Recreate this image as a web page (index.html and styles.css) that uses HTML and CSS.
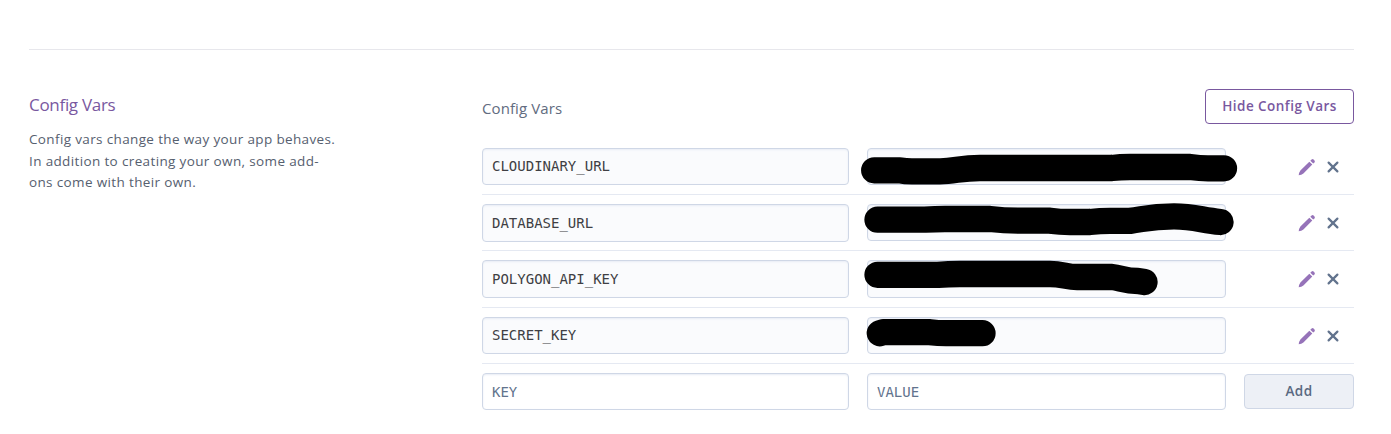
FILE: index.html
```html
<!DOCTYPE html>
<html lang="en">
<head>
<meta charset="utf-8">
<title>Config Vars</title>
<link rel="stylesheet" href="styles.css">
</head>
<body>
<svg class="defs" aria-hidden="true">
  <symbol id="pencil" viewBox="0 0 18 18"><path d="M.7 17.2Q1 14.4 2.4 12.5L11.3 3.7 14.3 6.6 5.4 15.4Q3.5 16.9.7 17.2ZM12.3 2.7 13.6 1.4Q14.5.7 15.6 1.6L16.5 2.5Q17.3 3.5 16.5 4.4L15.2 5.6Z"/></symbol>
  <symbol id="cross" viewBox="0 0 12 12"><path d="M1.6 1.6 10.4 10.4M10.4 1.6 1.6 10.4"/></symbol>
</svg>
<main class="section">
  <aside class="intro">
    <h2 class="intro-title">Config Vars</h2>
    <p class="intro-text">Config vars change the way your app behaves.<br>In addition to creating your own, some add-<br>ons come with their own.</p>
  </aside>
  <section class="config">
    <header class="config-head">
      <h3 class="config-title">Config Vars</h3>
      <button class="btn btn-outline">Hide Config Vars</button>
    </header>
    <div class="row">
      <div class="field">CLOUDINARY_URL</div>
      <div class="field value"><svg class="redaction" viewBox="857 148 390 37"><path d="M874.2 170.3H900Q905 171.3 912 171.3H940C955 171.3 960 168 980 168H1112Q1120 167 1130 167H1190Q1200 168.3 1208 168.3H1224"/></svg></div>
      <div class="actions"><svg class="pencil"><use href="#pencil"/></svg><svg class="cross"><use href="#cross"/></svg></div>
    </div>
    <div class="row">
      <div class="field tall">DATABASE_URL</div>
      <div class="field value"><svg class="redaction" viewBox="857 204 390 37"><path d="M877.5 219.7H925Q935 219 945 219H990Q1005 220.7 1020 220.7H1050Q1060 222 1070 222H1090Q1100 220.9 1110 220.9H1130C1145 219 1150 216.4 1174 216.4C1195 216.4 1202 220.5 1220.5 222"/></svg></div>
      <div class="actions"><svg class="pencil"><use href="#pencil"/></svg><svg class="cross"><use href="#cross"/></svg></div>
    </div>
    <div class="row row-tall">
      <div class="field tall">POLYGON_API_KEY</div>
      <div class="field value tall"><svg class="redaction" viewBox="857 260 390 37"><path d="M877.5 274.8H938Q948 274 960 274H1050C1062 274 1067 277 1077 277H1112C1121 278 1125 281 1138 281L1144.5 282"/></svg></div>
      <div class="actions tall"><svg class="pencil"><use href="#pencil"/></svg><svg class="cross"><use href="#cross"/></svg></div>
    </div>
    <div class="row">
      <div class="field">SECRET_KEY</div>
      <div class="field value"><svg class="redaction" viewBox="857 317 390 37"><path d="M879.8 333.2 883 332.2H930Q938 333.2 946 333.2H982.5"/></svg></div>
      <div class="actions"><svg class="pencil"><use href="#pencil"/></svg><svg class="cross"><use href="#cross"/></svg></div>
    </div>
    <div class="row row-new">
      <input class="field entry" placeholder="KEY" aria-label="Key">
      <input class="field entry" placeholder="VALUE" aria-label="Value">
      <button class="btn btn-add">Add</button>
    </div>
  </section>
</main>
</body>
</html>
```
FILE: styles.css
```css
* { box-sizing: border-box; }
body {
  margin: 0;
  height: 434px;
  overflow: hidden;
  background: #fff;
  color: #3f3f44;
  font-family: "Open Sans", "Noto Sans", sans-serif;
}
.defs { display: none; }
.section {
  display: grid;
  grid-template-columns: 453px 872px;
  margin: 49px 37px 0 29px;
  padding-top: 39px;
  border-top: 1px solid #e7e7ec;
}
.intro-title {
  margin: 3px 0 0;
  font-size: 17px;
  line-height: 26px;
  font-weight: 400;
  color: #79589f;
  letter-spacing: -.3px;
}
.intro-text {
  margin: 11px 0 0;
  font-size: 13.5px;
  line-height: 21.5px;
  color: #56606f;
  letter-spacing: .36px;
  white-space: nowrap;
}
.config-head {
  display: flex;
  justify-content: space-between;
  align-items: flex-start;
  height: 50px;
}
.config-title {
  margin: 7px 0 0;
  font-size: 15px;
  line-height: 24px;
  font-weight: 400;
  color: #626c80;
  letter-spacing: .1px;
}
.btn {
  height: 35px;
  padding: 0 0 1px;
  border: 1px solid;
  border-radius: 4px;
  font: 600 13.5px "Open Sans", sans-serif;
  letter-spacing: .45px;
}
.btn-outline {
  width: 149px;
  background: #fff;
  border-color: #79589f;
  color: #79589f;
}
.row {
  display: grid;
  grid-template-columns: 367px 359px 110px;
  column-gap: 18px;
  align-items: start;
  height: 56px;
  padding-top: 9px;
  border-bottom: 1px solid #e5e9f2;
}
.row-tall { height: 57px; }
.row-new { border-bottom: 0; }
.field {
  position: relative;
  width: 100%;
  height: 37px;
  padding: 0 9px;
  border: 1px solid #cfd7e6;
  border-radius: 4px;
  background: #fafbfd;
  box-shadow: inset 0 1px 2px #e8edf5;
  font: 14px/35px "DejaVu Sans Mono", monospace;
  color: #3f3f44;
}
.field.tall { height: 38px; line-height: 37px; }
.actions.tall { height: 38px; }
.entry { background: #fff; }
.entry::placeholder { color: #62738d; opacity: 1; }
.redaction {
  position: absolute;
  left: -11px;
  top: -1px;
  width: 390px;
  height: 37px;
  overflow: visible;
  fill: none;
  stroke: #000;
  stroke-width: 26.3;
  stroke-linecap: round;
  stroke-linejoin: round;
}
.actions {
  display: flex;
  align-items: center;
  justify-content: flex-end;
  gap: 11px;
  height: 37px;
  padding-right: 15px;
}
.pencil { width: 18px; height: 18px; fill: #9673b9; }
.cross {
  width: 12px;
  height: 12px;
  fill: none;
  stroke: #62738d;
  stroke-width: 2.2;
  stroke-linecap: round;
}
.btn-add {
  width: 110px;
  margin-top: 1px;
  background: #edf0f6;
  border-color: #cfd7e6;
  color: #596981;
}
```
